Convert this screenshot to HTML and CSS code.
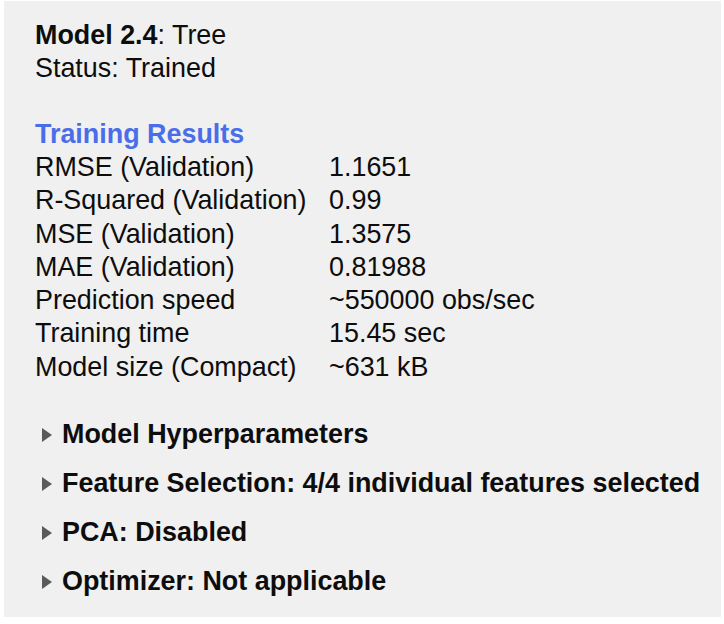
FILE: index.html
```html
<!DOCTYPE html>
<html>
<head>
<meta charset="utf-8">
<link rel="stylesheet" href="styles.css">
</head>
<body>
<div class="panel">
  <div class="line"><b>Model 2.4</b>: Tree</div>
  <div class="line">Status: Trained</div>
  <div class="heading">Training Results</div>
  <div class="results">
    <div class="label">RMSE (Validation)</div><div class="value">1.1651</div>
    <div class="label">R-Squared (Validation)</div><div class="value">0.99</div>
    <div class="label">MSE (Validation)</div><div class="value">1.3575</div>
    <div class="label">MAE (Validation)</div><div class="value">0.81988</div>
    <div class="label">Prediction speed</div><div class="value">~550000 obs/sec</div>
    <div class="label">Training time</div><div class="value">15.45 sec</div>
    <div class="label">Model size (Compact)</div><div class="value">~631 kB</div>
  </div>
  <div class="sections">
    <div class="section"><span class="tri"></span>Model Hyperparameters</div>
    <div class="section"><span class="tri"></span>Feature Selection: 4/4 individual features selected</div>
    <div class="section"><span class="tri"></span>PCA: Disabled</div>
    <div class="section"><span class="tri"></span>Optimizer: Not applicable</div>
  </div>
</div>
</body>
</html>
```
FILE: styles.css
```css
html, body {
  margin: 0;
  padding: 0;
  background: #ffffff;
}
body {
  font-family: "Liberation Sans", Arial, sans-serif;
  font-size: 26.9px;
  color: #0d0d0d;
}
.panel {
  margin: 1px 0 0 4px;
  width: 717px;
  height: 616px;
  box-sizing: border-box;
  background: #f0f0f0;
  padding: 18px 0 0 31px;
}
.line {
  line-height: 33px;
  white-space: nowrap;
}
.heading {
  margin-top: 33px;
  line-height: 33px;
  font-weight: bold;
  color: #4a6de8;
}
.results {
  display: grid;
  grid-template-columns: 294px auto;
  line-height: 33.3px;
  white-space: nowrap;
}
.sections {
  margin-top: 26px;
  padding-left: 7px;
}
.section {
  display: flex;
  align-items: center;
  height: 49px;
  font-weight: bold;
  white-space: nowrap;
}
.tri {
  width: 0;
  height: 0;
  border-top: 7px solid transparent;
  border-bottom: 7px solid transparent;
  border-left: 10px solid #5a5a5a;
  margin-right: 10px;
}
```
